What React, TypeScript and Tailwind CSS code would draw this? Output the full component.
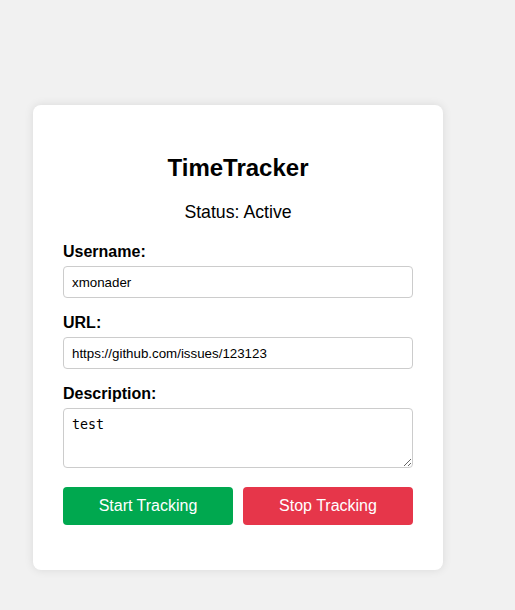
import React from "react";

export default function App() {
  const font = { fontFamily: '"Liberation Sans", Arial, sans-serif' };
  return (
    <div className="min-h-[610px] w-full bg-[#f1f1f1] pt-[105px] pl-[33px]" style={font}>
      <div className="w-[410px] rounded-lg bg-white px-[30px] pt-[30px] pb-[45px] shadow-[0_0_10px_rgba(0,0,0,0.1)]">
        <h1 className="mt-[19px] text-center text-[24px] font-bold leading-[28px] text-black">TimeTracker</h1>
        <p className="mt-[20px] text-center text-[17.7px] leading-[21px] text-black">Status: Active</p>
        <div className="mt-[20px] flex flex-col">
          <label className="mb-[5px] text-[16px] font-bold leading-[18px] text-black">Username:</label>
          <input
            defaultValue="xmonader"
            className="h-[32px] w-full rounded-[4px] border border-[#cccccc] px-[8px] text-[13.33px] text-black outline-none"
            style={font}
          />
          <label className="mt-[16px] mb-[5px] text-[16px] font-bold leading-[18px] text-black">URL:</label>
          <input
            defaultValue="https://github.com/issues/123123"
            className="h-[32px] w-full rounded-[4px] border border-[#cccccc] px-[8px] text-[13.33px] text-black outline-none"
            style={font}
          />
          <label className="mt-[16px] mb-[5px] text-[16px] font-bold leading-[18px] text-black">Description:</label>
          <textarea
            defaultValue="test"
            className="h-[60px] w-full resize-y rounded-[4px] border border-[#cccccc] px-[8px] py-[7px] text-[13.33px] leading-[17px] text-black outline-none"
            style={{ fontFamily: '"DejaVu Sans Mono", monospace' }}
          />
          <div className="mt-[19px] flex gap-[10px]">
            <button className="h-[38px] flex-1 rounded-[4px] bg-[#00a84f] text-[16px] text-white">Start Tracking</button>
            <button className="h-[38px] flex-1 rounded-[4px] bg-[#e6364a] text-[16px] text-white">Stop Tracking</button>
          </div>
        </div>
      </div>
    </div>
  );
}
